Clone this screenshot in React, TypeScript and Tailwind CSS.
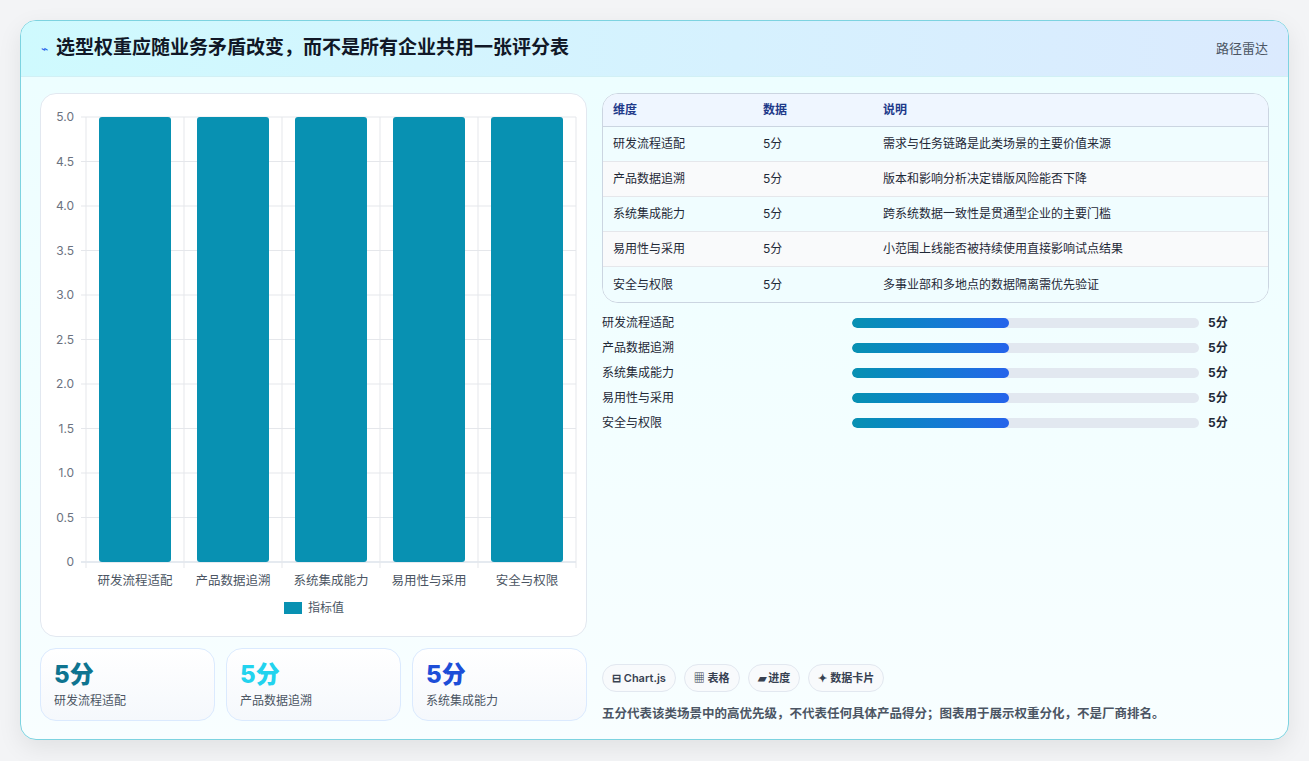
import React from "react";

const dims = ["研发流程适配", "产品数据追溯", "系统集成能力", "易用性与采用", "安全与权限"];
const notes = [
  "需求与任务链路是此类场景的主要价值来源",
  "版本和影响分析决定错版风险能否下降",
  "跨系统数据一致性是贯通型企业的主要门槛",
  "小范围上线能否被持续使用直接影响试点结果",
  "多事业部和多地点的数据隔离需优先验证",
];

function Chart() {
  const x0 = 45, x1 = 535, yTop = 23, yBot = 468;
  const ticks = ["5.0", "4.5", "4.0", "3.5", "3.0", "2.5", "2.0", "1.5", "1.0", "0.5", "0"];
  const w = (x1 - x0) / 5;
  return (
    <svg width="546" height="543" className="block">
      {ticks.map((t, i) => {
        const y = yTop + ((yBot - yTop) * i) / 10;
        return (
          <g key={t}>
            <line x1={x0 - 5} x2={x1} y1={y} y2={y} stroke={i === 10 ? "#cbd5e1" : "#e5e7eb"} />
            <text x={x0 - 12} y={y + 4} textAnchor="end" fontSize="12" fill="#6b7280">{t}</text>
          </g>
        );
      })}
      {[0, 1, 2, 3, 4, 5].map((i) => (
        <line key={i} x1={x0 + w * i} x2={x0 + w * i} y1={yTop} y2={yBot + 6} stroke="#e5e7eb" />
      ))}
      {dims.map((d, i) => (
        <g key={d}>
          <rect x={x0 + w * i + 13} y={yTop} width={w - 26} height={yBot - yTop} rx="3" fill="#0891b2" />
          <text x={x0 + w * i + w / 2} y={yBot + 23} textAnchor="middle" fontSize="12.5" fill="#4b5563">{d}</text>
        </g>
      ))}
      <rect x="243" y="508" width="18" height="12" fill="#0891b2" />
      <text x="267" y="518" fontSize="12" fill="#4b5563">指标值</text>
    </svg>
  );
}

export default function App() {
  return (
    <div className="w-[1309px] h-[761px] bg-[#f3f4f6] pt-[20px] px-[20px]" style={{ fontFamily: "Inter, 'Noto Sans CJK SC', sans-serif" }}>
      <div className="w-[1269px] h-[720px] rounded-2xl border border-[#7dd3e0] bg-gradient-to-b from-[#ecfeff] to-[#f8feff] shadow-[0_8px_24px_rgba(0,0,0,0.08)] overflow-hidden flex flex-col">
        <div className="h-[56px] flex items-center justify-between px-[20px] bg-gradient-to-r from-[#cffafe] to-[#dbeafe] border-b border-[#d1f0f5]">
          <div className="flex items-center gap-2">
            <span className="text-[#2563eb] text-xs">⌁</span>
            <span className="text-[19px] font-bold text-[#111827]">选型权重应随业务矛盾改变，而不是所有企业共用一张评分表</span>
          </div>
          <span className="text-[13px] text-[#4b5563]">路径雷达</span>
        </div>
        <div className="flex gap-[15px] px-[19px] pt-[16px]">
          <div className="w-[547px] flex flex-col gap-[11px]">
            <div className="h-[544px] bg-white rounded-2xl border border-[#e2e8f0]">
              <Chart />
            </div>
            <div className="flex gap-[11px]">
              {[["#0e7490", dims[0]], ["#22d3ee", dims[1]], ["#1d4ed8", dims[2]]].map(([c, l]) => (
                <div key={l} className="w-[175px] h-[73px] rounded-2xl border border-[#dbeafe] bg-gradient-to-b from-white to-[#f5f8fc] px-[13px] pt-[11px]">
                  <div className="text-[24px] font-extrabold leading-[30px]" style={{ color: c }}>5分</div>
                  <div className="text-[12px] text-[#4b5563] mt-[2px]">{l}</div>
                </div>
              ))}
            </div>
          </div>
          <div className="flex-1 flex flex-col">
            <div className="rounded-2xl border border-[#cbd5e1] overflow-hidden bg-white">
              <div className="flex h-[33px] items-center bg-[#eff6ff] border-b border-[#cbd5e1] text-[12px] font-semibold text-[#1e3a8a]">
                <div className="w-[160px] pl-[10px]">维度</div>
                <div className="w-[120px]">数据</div>
                <div>说明</div>
              </div>
              {dims.map((d, i) => (
                <div key={d} className={`flex h-[35px] items-center text-[12px] text-[#1f2937] ${i < 4 ? "border-b border-[#e5e7eb]" : ""} ${i % 2 ? "bg-[#f9fafb]" : "bg-[#f0fdff]"}`}>
                  <div className="w-[160px] pl-[10px]">{d}</div>
                  <div className="w-[120px]">5分</div>
                  <div>{notes[i]}</div>
                </div>
              ))}
            </div>
            <div className="flex flex-col gap-[9px] mt-[12px]">
              {dims.map((d) => (
                <div key={d} className="flex items-center h-[16px] text-[12px] text-[#1f2937]">
                  <div className="w-[250px]">{d}</div>
                  <div className="w-[347px] h-[10px] rounded-full bg-[#e2e8f0] overflow-hidden">
                    <div className="h-full w-[157px] rounded-full bg-gradient-to-r from-[#0891b2] to-[#2563eb]" />
                  </div>
                  <div className="ml-[9px] font-bold">5分</div>
                </div>
              ))}
            </div>
            <div className="flex-1" />
            <div className="flex gap-[8px] mt-[233px]">
              {["⊟ Chart.js", "▦ 表格", "▰ 进度", "✦ 数据卡片"].map((t) => (
                <div key={t} className="h-[28px] px-[9px] rounded-full border border-[#e2e8f0] bg-[#f8fafc] flex items-center text-[11px] font-semibold text-[#374151]">{t}</div>
              ))}
            </div>
            <div className="mt-[13px] text-[12.5px] font-semibold text-[#4b5563]">五分代表该类场景中的高优先级，不代表任何具体产品得分；图表用于展示权重分化，不是厂商排名。</div>
          </div>
        </div>
      </div>
    </div>
  );
}
